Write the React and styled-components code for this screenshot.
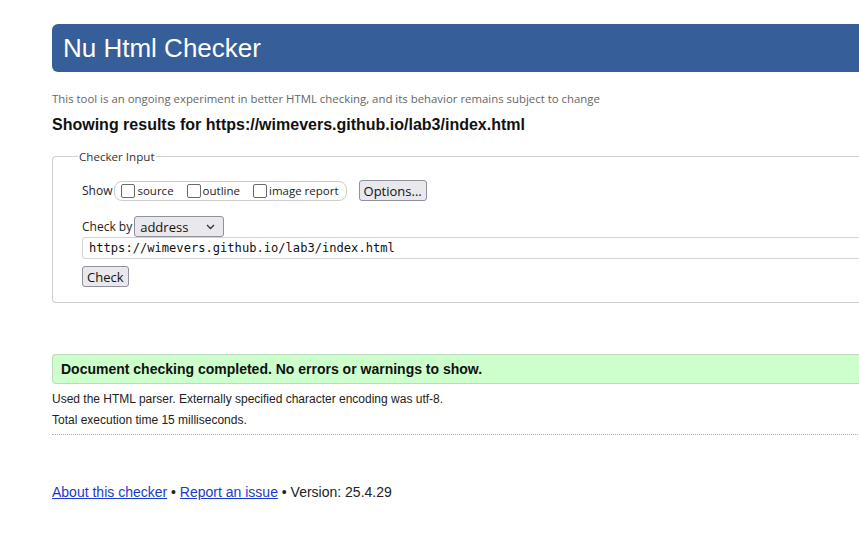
import styled, { createGlobalStyle } from "styled-components";

const Global = createGlobalStyle`
  html, body {
    margin: 0;
    padding: 0;
    overflow: hidden;
    background: #fff;
  }
  body {
    font-family: "Liberation Sans", Arial, sans-serif;
    color: #222;
  }
`;

const Page = styled.div`
  width: 900px;
  padding: 24px 0 0 52px;
`;

const Header = styled.h1`
  margin: 0;
  height: 48px;
  display: flex;
  align-items: center;
  padding-left: 11px;
  background: #365e99;
  color: #fff;
  border-radius: 6px 0 0 6px;
  font-family: "Liberation Sans", Arial, sans-serif;
  font-weight: 400;
  font-size: 26px;
`;

const Intro = styled.p`
  margin: 19px 0 0;
  font-family: "Open Sans", sans-serif;
  font-size: 11.4px;
  color: #666;
`;

const Results = styled.h2`
  margin: 10px 0 0;
  font-size: 16px;
  font-weight: 700;
  color: #111;
`;

const Fieldset = styled.fieldset`
  margin: 15px 0 0;
  padding: 8px 28px 13px 29px;
  height: 154px;
  box-sizing: border-box;
  border: 1px solid #cfcfcf;
  border-right: none;
  border-radius: 4px 0 0 4px;
  font-family: "Open Sans", sans-serif;
  font-size: 12px;
  color: #222;
`;

const Legend = styled.legend`
  margin-left: -4px;
  padding: 0 1px;
  font-size: 11.6px;
  color: #333;
`;

const Row = styled.div`
  display: flex;
  align-items: center;
  gap: ${(p) => p.gap || 4}px;
  margin-top: ${(p) => p.top || 0}px;
`;

const Label = styled.span`
  font-size: 12px;
  color: #222;
`;

const Pill = styled.div`
  display: flex;
  align-items: center;
  height: 18px;
  padding: 0 7px 0 6px;
  gap: 13px;
  border: 1px solid #cdcdcd;
  border-radius: 8px;
`;

const Choice = styled.label`
  display: flex;
  align-items: center;
  gap: 2px;
  font-size: 11.5px;
  color: #222;
`;

const Box = styled.span`
  width: 12px;
  height: 12px;
  border: 1px solid #6a6a6a;
  border-radius: 2px;
  background: #fff;
`;

const Button = styled.button`
  height: 21px;
  padding: 0 4px;
  margin-left: ${(p) => p.left || 0}px;
  background: #e8e8ed;
  border: 1px solid #8f8f9d;
  border-radius: 3px;
  font-family: "Open Sans", sans-serif;
  font-size: ${(p) => p.size || 12}px;
  color: #111;
`;

const Select = styled.div`
  width: 90px;
  height: 21px;
  box-sizing: border-box;
  display: flex;
  align-items: center;
  justify-content: space-between;
  padding: 0 8px 0 5px;
  background: #e8e8ed;
  border: 1px solid #8f8f9d;
  border-radius: 3px;
  font-size: 13px;
  color: #111;
`;

const UrlInput = styled.div`
  margin-top: 0;
  margin-right: -28px;
  height: 22px;
  box-sizing: border-box;
  display: flex;
  align-items: center;
  padding-left: 6px;
  border: 1px solid #d4d4d4;
  border-right: none;
  border-radius: 4px 0 0 4px;
  font-family: "DejaVu Sans Mono", "Liberation Mono", monospace;
  font-size: 12.1px;
  color: #111;
`;

const Notice = styled.div`
  margin-top: 51px;
  height: 30px;
  box-sizing: border-box;
  display: flex;
  align-items: center;
  padding-left: 8px;
  background: #ccffcc;
  border: 1px solid #bcdcbc;
  border-right: none;
  border-radius: 4px 0 0 4px;
  font-size: 14px;
  font-weight: 700;
  color: #111;
`;

const Detail = styled.p`
  margin: ${(p) => p.top || 0}px 0 0;
  font-size: 12px;
  color: #222;
`;

const Divider = styled.hr`
  margin: 7px 0 0;
  border: none;
  border-top: 1px dotted #aaa;
`;

const Footer = styled.p`
  margin: 49px 0 0;
  font-size: 14px;
  color: #222;
`;

const Link = styled.a`
  color: #1a3acb;
  text-decoration: underline;
`;

const Chevron = () => (
  <svg width="9" height="6" viewBox="0 0 9 6">
    <path d="M1 1l3.5 3.5L8 1" fill="none" stroke="#333" strokeWidth="1.3" />
  </svg>
);

export default function App() {
  return (
    <Page>
      <Global />
      <Header>Nu Html Checker</Header>
      <Intro>
        This tool is an ongoing experiment in better HTML checking, and its
        behavior remains subject to change
      </Intro>
      <Results>Showing results for https://wimevers.github.io/lab3/index.html</Results>
      <Fieldset>
        <Legend>Checker Input</Legend>
        <Row top={8} gap={2}>
          <Label>Show</Label>
          <Pill>
            <Choice>
              <Box />
              source
            </Choice>
            <Choice>
              <Box />
              outline
            </Choice>
            <Choice>
              <Box />
              image report
            </Choice>
          </Pill>
          <Button left={10} size={13}>
            Options...
          </Button>
        </Row>
        <Row top={15} gap={2}>
          <Label>Check by</Label>
          <Select>
            address
            <Chevron />
          </Select>
        </Row>
        <UrlInput>https://wimevers.github.io/lab3/index.html</UrlInput>
        <Row top={7}>
          <Button size={13}>Check</Button>
        </Row>
      </Fieldset>
      <Notice>Document checking completed. No errors or warnings to show.</Notice>
      <Detail top={8}>
        Used the HTML parser. Externally specified character encoding was utf-8.
      </Detail>
      <Detail top={7}>Total execution time 15 milliseconds.</Detail>
      <Divider />
      <Footer>
        <Link href="#">About this checker</Link> •{" "}
        <Link href="#">Report an issue</Link> • Version: 25.4.29
      </Footer>
    </Page>
  );
}
